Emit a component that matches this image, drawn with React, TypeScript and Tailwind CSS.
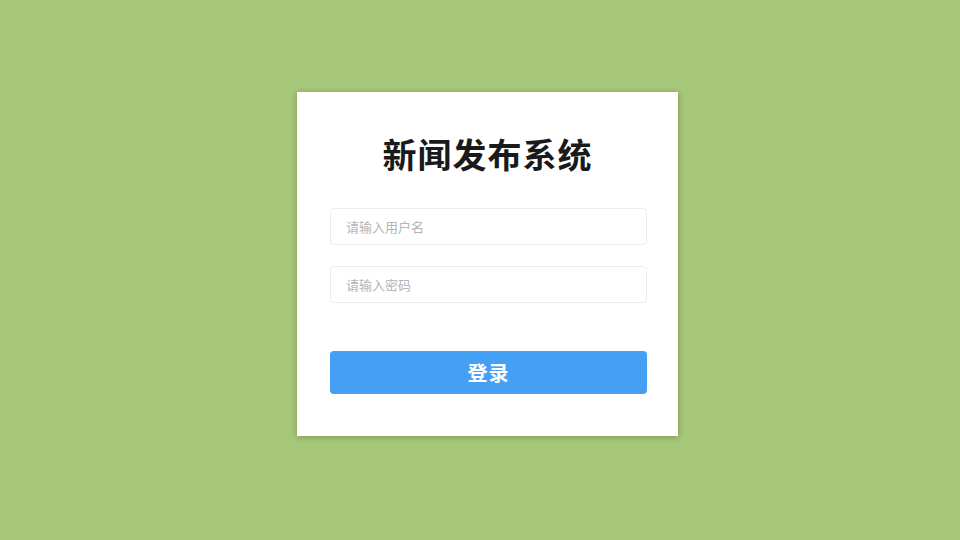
import * as React from "react";

const cjk = { fontFamily: '"Noto Sans CJK SC", "Noto Sans", sans-serif' };

export default function App() {
  return (
    <div className="w-[960px] h-[540px] bg-[#a6c679] flex items-start justify-center" style={cjk}>
      <div className="mt-[92px] ml-[15px] w-[381px] h-[344px] bg-white shadow-[0_1px_6px_rgba(0,0,0,0.25)] px-[33px] pt-[36px] flex flex-col">
        {/* Title */}
        <h1 className="text-center text-[34px] leading-[52px] font-bold text-[#1a1a1a] tracking-[1px]">新闻发布系统</h1>

        {/* Inputs */}
        <div className="mt-[28px] flex flex-col gap-[21px]">
          <input
            type="text"
            placeholder="请输入用户名"
            className="w-[317px] h-[37px] rounded-[4px] border border-[#ececec] px-[15px] text-[13px] text-[#333] placeholder:text-[#b4b4b4] outline-none"
          />
          <input
            type="password"
            placeholder="请输入密码"
            className="w-[317px] h-[37px] rounded-[4px] border border-[#ececec] px-[15px] text-[13px] text-[#333] placeholder:text-[#b4b4b4] outline-none"
          />
        </div>

        {/* Submit */}
        <button className="mt-[48px] w-[317px] h-[43px] rounded-[4px] bg-[#45a0f5] text-white text-[20px] font-bold tracking-[1px]">
          登录
        </button>
      </div>
    </div>
  );
}
